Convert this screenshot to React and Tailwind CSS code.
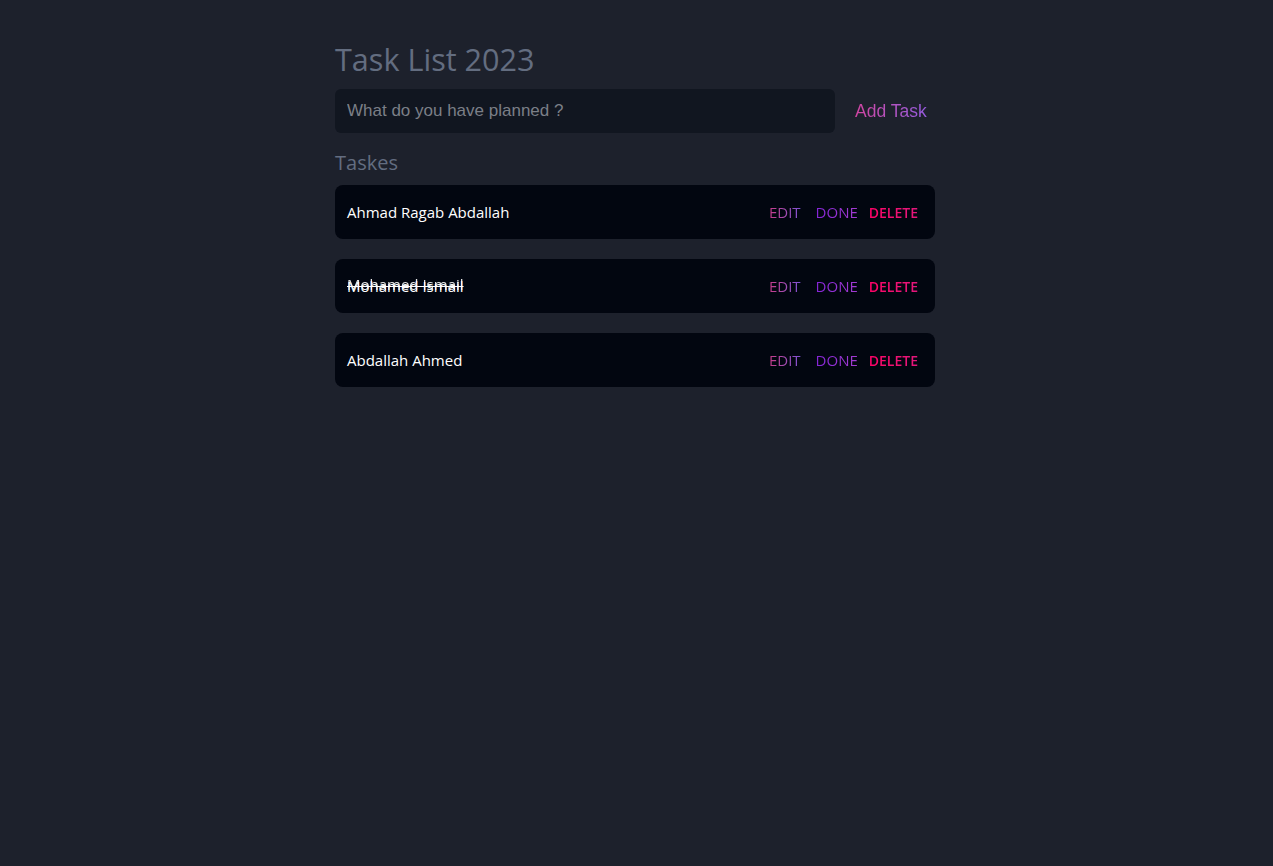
import React from "react";

const tasks = [
  { id: 1, text: "Ahmad Ragab Abdallah", done: false },
  { id: 2, text: "Mohamed Ismail", done: true },
  { id: 3, text: "Abdallah Ahmed", done: false },
];

function TaskRow({ task }) {
  return (
    <div className="flex h-[54px] items-center rounded-lg bg-[#020610] pl-3 pr-[17px]">
      <div className="flex-1 text-[15px] text-white">
        {task.done ? (
          <span className="relative inline-block">
            <span className="line-through">{task.text}</span>
            <span className="absolute left-0 top-[-2px] opacity-90">{task.text}</span>
          </span>
        ) : (
          <span>{task.text}</span>
        )}
      </div>
      <button className="bg-linear-to-r from-[#c73a8a] to-[#7d4fd3] bg-clip-text text-[15px] uppercase text-transparent">
        Edit
      </button>
      <button className="ml-[15px] bg-linear-to-r from-[#8524d6] to-[#a33bd0] bg-clip-text text-[15px] uppercase text-transparent">
        Done
      </button>
      <button className="ml-[11px] bg-linear-to-r from-[#ff0066] to-[#e3167c] bg-clip-text text-[14px] font-semibold uppercase text-transparent">
        Delete
      </button>
    </div>
  );
}

export default function App() {
  return (
    <div
      className="min-h-[866px] w-full bg-[#1d212c]"
      style={{ fontFamily: '"Open Sans", "Noto Sans", sans-serif' }}
    >
      <div className="ml-[335px] w-[600px] pt-[41px]">
        <h1 className="mb-[12px] text-[30.6px] leading-9 text-[#636d80]">Task List 2023</h1>
        <form className="flex" onSubmit={(e) => e.preventDefault()}>
          <input
            type="text"
            placeholder="What do you have planned ?"
            className="h-[44px] flex-1 rounded-md bg-[#111620] px-3 text-[17px] text-white outline-none placeholder:text-[#7b7f87]"
            style={{ fontFamily: '"Liberation Sans", Arial, sans-serif' }}
          />
          <button
            type="submit"
            className="w-[100px] bg-linear-to-r from-[#e0338f] to-[#8e5be6] bg-clip-text pl-5 text-left text-[17.5px] text-transparent"
            style={{ fontFamily: '"Liberation Sans", Arial, sans-serif' }}
          >
            Add Task
          </button>
        </form>
        <h2 className="mb-[8px] mt-[16px] text-[20px] leading-7 text-[#636d80]">Taskes</h2>
        <div className="flex flex-col gap-5">
          {tasks.map((t) => (
            <TaskRow key={t.id} task={t} />
          ))}
        </div>
      </div>
    </div>
  );
}
